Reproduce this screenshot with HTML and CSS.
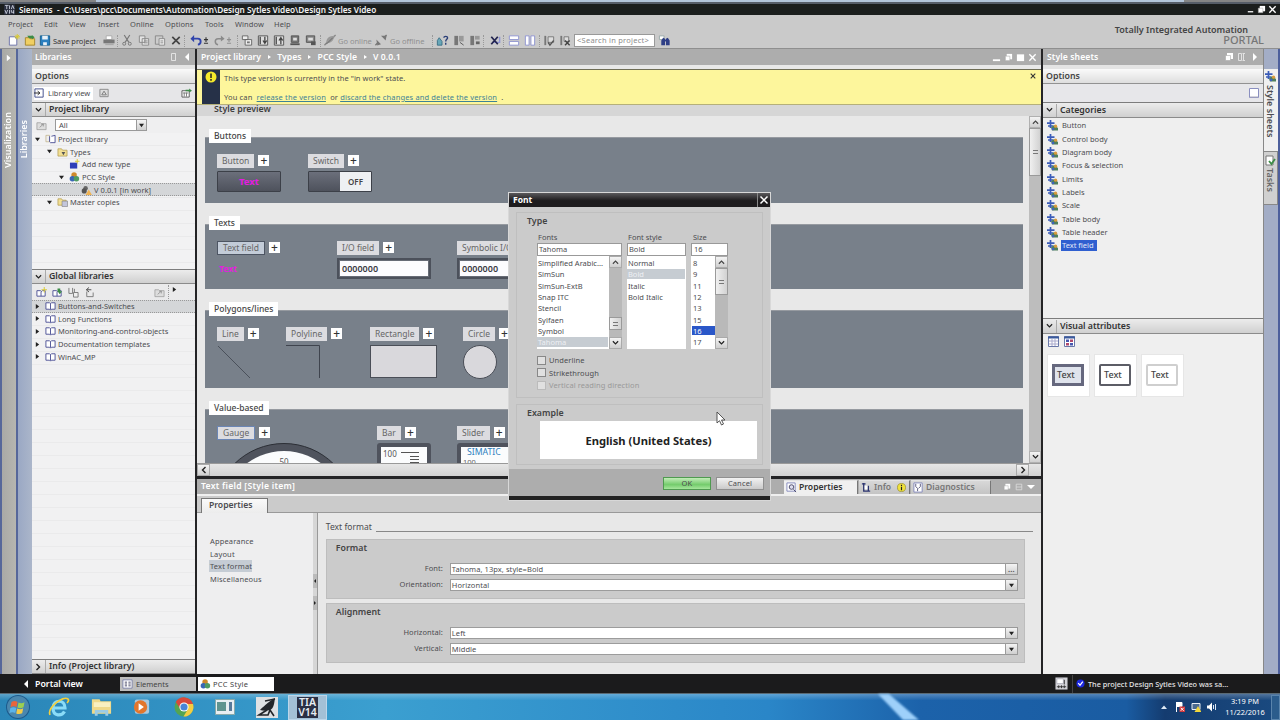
FILE: index.html
```html
<!DOCTYPE html>
<html lang="en">
<head>
    <meta charset="UTF-8">
    <meta name="viewport" content="width=device-width, initial-scale=1.0">
    <title>Siemens - Design Sytles Video</title>
    <link rel="stylesheet" href="styles.css">
</head>
<body>

<!-- shared icons -->
<svg class="defs" width="0" height="0">
    <symbol id="i-book" viewBox="0 0 12 10"><path d="M1 1.500h4l1 1 1-1h4v7H7l-1 1-1-1H1z" fill="#fff" stroke="#4a4f94"/><path d="M6 2.500v6.500" stroke="#4a4f94"/></symbol>
    <symbol id="i-cat" viewBox="0 0 11 11"><path d="M3.500 0v8M0 3.200h7.500M1 6h5" stroke="#3b5cb8" stroke-width="1.700"/><path d="M4 7.500 7 5l4 3v2.500H5z" fill="#4f7f5c"/><circle cx="8.600" cy="6.200" r="1.600" fill="#d99a3c"/><circle cx="6" cy="9" r="1.300" fill="#3f62bd"/></symbol>
    <symbol id="i-folder" viewBox="0 0 12 11"><path d="M1 2h4l1 1.500h4V9H1z" fill="#f2df94" stroke="#b09a4c" stroke-width=".8"/><path d="M5.500 4.500h6v6h-6z" fill="#c3c6dc" stroke="#777" stroke-width=".6"/></symbol>
    <symbol id="i-style" viewBox="0 0 12 12"><circle cx="5.500" cy="3.500" r="3.300" fill="#cf8a2c"/><circle cx="3.500" cy="8" r="3.300" fill="#3a67b5"/><circle cx="8.300" cy="8" r="3.300" fill="#4f9c63"/></symbol>
    <symbol id="i-down" viewBox="0 0 8 6"><path d="m1 1 3 3 3-3" fill="none" stroke="#222" stroke-width="1.400"/></symbol>
    <symbol id="i-up" viewBox="0 0 8 6"><path d="m1 5 3-3 3 3" fill="none" stroke="#444" stroke-width="1.300"/></symbol>
    <symbol id="i-right" viewBox="0 0 6 8"><path d="m1.500 1 3 3-3 3" fill="none" stroke="#222" stroke-width="1.400"/></symbol>
    <symbol id="i-tri" viewBox="0 0 6 6"><path d="M0 1h6L3 5z" fill="#222"/></symbol>
    <symbol id="i-trir" viewBox="0 0 6 6"><path d="M1 0v6l4-3z" fill="#222"/></symbol>
    <symbol id="i-float" viewBox="0 0 10 10"><path d="M3 1h6v6H3z" fill="#fff"/><path d="M1.500 3.500h5v5h-5z" fill="#fff" stroke="#aaa" stroke-width=".6"/></symbol>
    <symbol id="i-x" viewBox="0 0 10 10"><path d="m1.500 1.500 7 7m0-7-7 7" stroke="#fff" stroke-width="1.500"/></symbol>
    <symbol id="i-pm" viewBox="0 0 8 14"><path d="M4 3.500v5M1.800 6h4.400M1.800 10h4.400" stroke="currentColor" stroke-width="1.200"/></symbol>
    <symbol id="i-newf" viewBox="0 0 12 11"><path d="M1 2.500h4l1 1h5V10H1z" fill="#ddd" stroke="#999" stroke-width=".8"/><path d="M4 7.500 8 4m0 0H5.500M8 4v2.500" fill="none" stroke="#888" stroke-width=".8"/></symbol>
</svg>

<div class="topstrip"><i></i><b></b><i></i></div>
<div class="titlebar">
    <svg class="logo" viewBox="0 0 12 11"><path d="M0 0h12v11H0z" fill="#2b3040"/><path d="M1 1h4M3 1v4M6 1v4M8 5l1.500-4L11 5M1 6l1.500 4L4 6M6 6v4M8 6v2.500h3M10.500 6v4" fill="none" stroke="#d5d9e5" stroke-width=".9"/></svg>
    <span>Siemens &nbsp;-&nbsp; C:\Users\pcc\Documents\Automation\Design Sytles Video\Design Sytles Video</span>
    <div class="wbtns">
        <svg viewBox="0 0 10 10"><path d="M2 7.500h6" stroke="#fff" stroke-width="1.400"/></svg>
        <svg><use href="#i-float"/></svg>
        <svg><use href="#i-x"/></svg>
    </div>
</div>

<div class="top">
    <nav class="menu">
        <a class="m1">Project</a><a class="m2">Edit</a><a class="m3">View</a><a class="m4">Insert</a><a class="m5">Online</a><a class="m6">Options</a><a class="m7">Tools</a><a class="m8">Window</a><a>Help</a>
    </nav>
    <div class="toolbar">
        <svg viewBox="0 0 16 14"><path d="M3 3h6l2 2v7H3z" fill="#fff" stroke="#6a70a8"/><path d="M11.500 0v6M8.500 3h6M9.500 1l4 4m0-4-4 4" stroke="#d8c82e"/></svg>
        <svg viewBox="0 0 16 14"><path d="M3 4h4l1 1h5v7H3z" fill="#f0cf62" stroke="#a5862c"/><path d="M5 2h5V1l3 2.500L10 6V4.500H7z" fill="#3c8c46"/></svg>
        <svg class="save" viewBox="0 0 16 14"><path d="M3 2h10v10H3z" fill="#2a7fc0" stroke="#17608f"/><path d="M5 2h6v4H5zM6 9h4v3H6z" fill="#e8f1f8"/></svg>
        <span class="t-save">Save project</span>
        <svg class="g5" viewBox="0 0 16 14"><path d="M5 2h6v4H5z" fill="#fff" stroke="#999" stroke-width=".7"/><path d="M2 6h12v4H2z" fill="#777"/><path d="M4 10h9v2H4z" fill="#aaa"/></svg>
        <i class="sep"></i>
        <svg viewBox="0 0 16 14"><path d="m5 1 5 8m1-8L6 9" stroke="#777" stroke-width="1.200"/><circle cx="5" cy="10.500" r="1.600" fill="none" stroke="#777"/><circle cx="11" cy="10.500" r="1.600" fill="none" stroke="#777"/></svg>
        <svg class="g1" viewBox="0 0 16 14"><path d="M3 2h6v7H3zM6 5h7v7H6z" fill="#e4e4e4" stroke="#888"/><path d="M8 7.500h4M8 9.500h4" stroke="#888"/></svg>
        <svg viewBox="0 0 16 14"><path d="M3 2h8v9H3z" fill="#ccc" stroke="#888"/><path d="M7 5h6v7H7z" fill="#eee" stroke="#888"/><path d="M8.500 7.500h3M8.500 9.500h3" stroke="#888"/></svg>
        <svg viewBox="0 0 16 14"><path d="m4 3 8 8m0-8-8 8" stroke="#444" stroke-width="1.800"/></svg>
        <i class="sep"></i>
        <svg class="g2" viewBox="0 0 16 14"><path d="M5 5h5c4 0 4 6 0 6.500" fill="none" stroke="#3044ac" stroke-width="2"/><path d="M2 5l4-3.800V9z" fill="#3044ac"/></svg>
        <svg class="pm"><use href="#i-pm"/></svg>
        <svg class="redo" viewBox="0 0 16 14"><path d="M11 5H7c-4 0-4 6 0 6.500" fill="none" stroke="#8a8a8a" stroke-width="1.600"/><path d="m14 5-4-3.500V8z" fill="#8a8a8a"/></svg>
        <svg class="pm off"><use href="#i-pm"/></svg>
        <i class="sep g4"></i>
        <svg viewBox="0 0 16 14"><path d="M3 2h6v4H3zM6 6h7v6H6z" fill="#eee" stroke="#666"/><path d="M8 8h3v2H8z" fill="#777"/></svg>
        <svg viewBox="0 0 16 14"><path d="M3 2h10v10H3z" fill="#ddd" stroke="#555"/><path d="M5 3v8M10 3v6M8 7l2 3 2-3" fill="none" stroke="#444" stroke-width="1.400"/></svg>
        <svg viewBox="0 0 16 14"><path d="M3 2h10v10H3z" fill="#ddd" stroke="#555"/><path d="M5 3v8M10 11V5M8 7l2-3 2 3" fill="none" stroke="#444" stroke-width="1.400"/></svg>
        <svg viewBox="0 0 16 14"><path d="M4 2h8v7H4z" fill="#777" stroke="#555"/><path d="M6 4h4v3H6z" fill="#ddd"/><path d="M3 11h10" stroke="#555" stroke-width="2"/></svg>
        <svg viewBox="0 0 16 14"><path d="M3 2h9v7H3z" fill="#888" stroke="#555"/><path d="M5 4h5v3H5z" fill="#ddd"/><path d="M8 8h5v4H8z" fill="#555"/></svg>
        <i class="sep g1"></i>
        <svg viewBox="0 0 16 14"><path d="m2 12 3-3m6-5 3-3" stroke="#888" stroke-width="1.500"/><path d="M4 9c0-4 3-7 9-7-1 5-4 8-8 8z" fill="#999"/><path d="m4 11 7-7" stroke="#666"/></svg>
        <span class="off t-go">Go online</span>
        <svg viewBox="0 0 16 14"><path d="m2 12 3-3m6-5 3-3" stroke="#777" stroke-width="1.500"/><path d="m3 6 5 5-4 1.500zM8 2l5 5 1-5z" fill="#777"/></svg>
        <span class="off t-off">Go offline</span>
        <i class="sep"></i>
        <svg viewBox="0 0 16 14"><path d="M3 12V7l2-3 3 4v4z" fill="#68a7b8" stroke="#3b6f87"/><path d="M10 4c0-2 4-2 4 0s-2 1.500-2 4m0 1.500v2" fill="none" stroke="#2b3f77" stroke-width="1.500"/></svg>
        <svg class="g1" viewBox="0 0 16 14"><path d="M3 2h4v10H3z" fill="#777"/><path d="M8 2h5v6H8z" fill="#999"/><path d="m9 9 4 3" stroke="#555"/></svg>
        <svg viewBox="0 0 16 14"><path d="M3 2h4v10H3z" fill="#777"/><path d="M8 2h5v4H8z" fill="#999"/><path d="M9 8h4v3H9z" fill="#666"/></svg>
        <i class="sep"></i>
        <svg class="g2" viewBox="0 0 16 14"><path d="M5 9h8V3" fill="none" stroke="#8e95d4" stroke-width="1.500"/><path d="m4 3 7 8m0-8-7 8" stroke="#22244f" stroke-width="1.900"/></svg>
        <i class="sep"></i>
        <svg class="g1" viewBox="0 0 16 14"><path d="M3 2h10v4H3zM3 8h10v4H3z" fill="#fff" stroke="#8c92cf"/></svg>
        <svg viewBox="0 0 16 14"><path d="M3 2h4v10H3zM9 2h4v10H9z" fill="#fff" stroke="#8c92cf"/></svg>
        <i class="sep g1"></i>
        <svg viewBox="0 0 16 14"><path d="M3 2h2v10H3z" fill="#777"/><path d="M7 3h6v6H7z" fill="#ddd" stroke="#777"/><path d="m7 9 2 3 4-5" fill="none" stroke="#555" stroke-width="1.500"/></svg>
        <svg viewBox="0 0 16 14"><path d="M3 2h2v10H3z" fill="#777"/><path d="M7 3h5v5H7z" fill="#ddd" stroke="#777"/><path d="m8 7 5 5m0-5-5 5" stroke="#444" stroke-width="1.500"/></svg>
        <div class="search">&lt;Search in project&gt;</div>
        <svg class="g2" viewBox="0 0 16 14"><path d="M2 2h5v4H2z" fill="#fff" stroke="#9aa"/><path d="M4 12V7l2-3 2 1v7zM9 12V5l2-1 2 3v5z" fill="#2f3f86"/><path d="M7 7h3" stroke="#2f3f86" stroke-width="2"/></svg>
    </div>
    <div class="brand"><span>Totally Integrated Automation</span><b>PORTAL</b></div>
</div>

<div class="main">
    <div class="strip strip-vis"><svg viewBox="0 0 6 8"><path d="M1 0v8l4.500-4z" fill="#fff"/></svg><span>Visualization</span></div>
    <div class="strip strip-lib"><span>Libraries</span></div>

    <aside class="left">
        <div class="phead"><span>Libraries</span><svg class="pin" viewBox="0 0 8 8"><path d="M1.500.5h4v7h-4zM5.500.5v7" fill="none" stroke="#e2e2e2"/></svg><svg viewBox="0 0 8 8"><path d="M6 0v8L2 4z" fill="#fff"/></svg></div>
        <div class="opt">Options</div>
        <div class="libbar">
            <div class="libview"><svg viewBox="0 0 12 10"><path d="M1 .5h9v9H1z" fill="#fff" stroke="#3a4688"/><path d="M0 5h6M4 3l2.500 2L4 7" fill="none" stroke="#222"/></svg>Library view</div>
            <svg viewBox="0 0 12 10"><path d="M1 1h9v8H1z" fill="#ddd" stroke="#888"/><path d="m3 7 2.500-4L8 7z" fill="none" stroke="#777"/></svg>
            <svg class="lib-r" viewBox="0 0 12 11"><path d="M1 3h8v7H1z" fill="#fff" stroke="#555"/><path d="M2 5.500h6M3.500 5v4.500M6 5v4.500" stroke="#777"/><path d="M5 2h4V.5L12 3 9 5V3.500H5z" fill="#3c8c46"/></svg>
        </div>
        <div class="sec"><svg><use href="#i-down"/></svg><span>Project library</span></div>
        <div class="filter"><svg><use href="#i-newf"/></svg><div class="combo"><span>All</span><b><svg><use href="#i-tri"/></svg></b></div></div>
        <ul class="tree tree-a">
            <li class="l0"><svg class="ar"><use href="#i-tri"/></svg><svg class="ic" viewBox="0 0 12 10"><path d="M1 1h4v7H1z" fill="#eee" stroke="#b9a877" stroke-width=".7"/><path d="M5 2v6l1 1h5V1L7 2" fill="#fff" stroke="#4a4f94"/></svg>Project library</li>
            <li class="l1"><svg class="ar"><use href="#i-tri"/></svg><svg class="ic" viewBox="0 0 12 11"><path d="M1 2h4l1 1.500h5V10H1z" fill="#f2df94" stroke="#b09a4c" stroke-width=".8"/><path d="M5 5.500h4L7 9z" fill="#555"/></svg>Types</li>
            <li class="l2 noar"><svg class="ic" viewBox="0 0 12 11"><path d="M1 4h8v6.500H1z" fill="#2e3fb8"/><path d="M9 0v5M6.500 2.500h5" stroke="#d8c82e"/></svg>Add new type</li>
            <li class="l2"><svg class="ar"><use href="#i-tri"/></svg><svg class="ic"><use href="#i-style"/></svg>PCC Style</li>
            <li class="l3 noar sel"><svg class="ic" viewBox="0 0 12 11"><circle cx="5" cy="3.500" r="2.500" fill="#666"/><circle cx="3.500" cy="6.500" r="2.800" fill="#555"/><path d="m8.500 5 3.500 6H5z" fill="#f0b352"/></svg>V 0.0.1 [in work]</li>
            <li class="l1"><svg class="ar"><use href="#i-tri"/></svg><svg class="ic"><use href="#i-folder"/></svg>Master copies</li>
        </ul>
        <div class="sec"><svg><use href="#i-down"/></svg><span>Global libraries</span></div>
        <div class="gbar">
            <svg viewBox="0 0 12 12"><path d="M1 4h4l1 1 1-1h3v6H1zM5.500 5v5" fill="#fff" stroke="#4a4f94"/><path d="M9 0v6M6 3h6" stroke="#d8c82e"/></svg>
            <svg viewBox="0 0 12 12"><path d="M1 4h4l1 1 1-1h3v6H1zM5.500 5v5" fill="#fff" stroke="#4a4f94"/><path d="M6 1.500h3v3h2L8.500 8 6 4.500z" fill="#3c8c46"/></svg>
            <svg viewBox="0 0 12 12"><path d="M1 1v6h4V1M7 2v4" fill="none" stroke="#777"/><path d="M6 6h5v5H6z" fill="#eee" stroke="#777"/></svg>
            <svg viewBox="0 0 12 12"><path d="M3 5v5.500h7V6" fill="none" stroke="#777"/><path d="M8 3H3m2.500-2.500L2.500 3l3 2.500" fill="none" stroke="#444"/></svg>
            <svg class="g-new"><use href="#i-newf"/></svg><i></i><svg class="g-ar"><use href="#i-trir"/></svg>
        </div>
        <ul class="tree tree-b">
            <li class="l0 sel"><svg class="ar"><use href="#i-trir"/></svg><svg class="ic"><use href="#i-book"/></svg>Buttons-and-Switches</li>
            <li class="l0"><svg class="ar"><use href="#i-trir"/></svg><svg class="ic"><use href="#i-book"/></svg>Long Functions</li>
            <li class="l0"><svg class="ar"><use href="#i-trir"/></svg><svg class="ic"><use href="#i-book"/></svg>Monitoring-and-control-objects</li>
            <li class="l0"><svg class="ar"><use href="#i-trir"/></svg><svg class="ic"><use href="#i-book"/></svg>Documentation templates</li>
            <li class="l0"><svg class="ar"><use href="#i-trir"/></svg><svg class="ic"><use href="#i-book"/></svg>WinAC_MP</li>
        </ul>
        <div class="sec"><svg class="rt"><use href="#i-right"/></svg><span>Info (Project library)</span></div>
    </aside>

    <div class="center">
        <div class="phead crumbs">
            <span>Project library</span><i></i><span>Types</span><i></i><span>PCC Style</span><i></i><span>V 0.0.1</span>
            <div class="cbtns">
                <svg viewBox="0 0 10 10"><path d="M1 8h8" stroke="#fff" stroke-width="2"/></svg>
                <svg><use href="#i-float"/></svg>
                <svg viewBox="0 0 10 10"><path d="M1 1.500h8V9H1z" fill="#fff"/></svg>
                <svg><use href="#i-x"/></svg>
            </div>
        </div>
        <div class="notice">
            <div class="nicon"><svg viewBox="0 0 12 12"><circle cx="6" cy="6" r="5.500" fill="#f5e92c"/><path d="M6 2.500v4.500M6 8v1.700" stroke="#222" stroke-width="1.500"/></svg></div>
            <div class="ntext">
                <p>This type version is currently in the "in work" state.</p>
                <p class="nlinks">You can &nbsp;<a>release the version</a>&nbsp; or <a>discard the changes and delete the version</a>&nbsp; .</p>
            </div>
            <svg class="nclose" viewBox="0 0 6 6"><path d="m.7.7 4.600 4.600m0-4.600L.7 5.300" stroke="#333" stroke-width="1.100"/></svg>
        </div>
        <div class="pvhead"><span>Style preview</span></div>
        <div class="pvrow">
            <div class="preview">
                <section class="box b-buttons">
                    <h4>Buttons</h4>
                    <div class="items">
                        <div class="it w91"><p><span>Button</span><b>+</b></p><div class="btn3d">Text</div></div>
                        <div class="it"><p><span>Switch</span><b>+</b></p><div class="switch"><i></i><u>OFF</u></div></div>
                    </div>
                </section>
                <section class="box b-texts">
                    <h4>Texts</h4>
                    <div class="items">
                        <div class="it w120"><p><span class="act">Text field</span><b>+</b></p><div class="ptext">Text</div></div>
                        <div class="it w120"><p><span>I/O field</span><b>+</b></p><div class="io">0000000</div></div>
                        <div class="it"><p><span>Symbolic I/O field</span><b>+</b></p><div class="io">0000000</div></div>
                    </div>
                </section>
                <section class="box b-poly">
                    <h4>Polygons/lines</h4>
                    <div class="items">
                        <div class="it w69"><p><span>Line</span><b>+</b></p><svg width="36" height="36"><path d="m1 1 32 32" stroke="#4a505a"/></svg></div>
                        <div class="it w84"><p><span>Polyline</span><b>+</b></p><svg width="36" height="36"><path d="M0 .5h33.500V33" fill="none" stroke="#3f444e"/></svg></div>
                        <div class="it w93"><p><span>Rectangle</span><b>+</b></p><div class="rect"></div></div>
                        <div class="it"><p><span>Circle</span><b>+</b></p><div class="circle"></div></div>
                    </div>
                </section>
                <section class="box b-value">
                    <h4>Value-based</h4>
                    <div class="items">
                        <div class="it w160"><p><span class="act2">Gauge</span><b>+</b></p><svg class="gauge" width="134" height="24" viewBox="0 0 134 24"><circle cx="67" cy="72" r="70.500" fill="#4f535d" stroke="#2c2f36"/><circle cx="67" cy="71" r="62" fill="#fbfcfd"/><text x="67" y="22.500" text-anchor="middle">50</text></svg></div>
                        <div class="it w80"><p><span>Bar</span><b>+</b></p><div class="bar">100<svg width="20" height="12"><path d="M1 1.500h18M10 5.500h9M10 8.500h9M10 11.500h9" stroke="#555"/></svg></div></div>
                        <div class="it"><p><span>Slider</span><b>+</b></p><div class="bar slider">SIMATIC<small>100</small></div></div>
                    </div>
                </section>
            </div>
            <div class="vscroll"><b><svg><use href="#i-up"/></svg></b><div class="thumb"><i></i></div><div class="track"></div><b><svg><use href="#i-down"/></svg></b></div>
        </div>
        <div class="hscroll"><b><svg class="flip"><use href="#i-right"/></svg></b><div></div><b><svg><use href="#i-right"/></svg></b></div>

        <div class="phead props-head">
            <span>Text field [Style item]</span>
            <div class="ptabs">
                <div class="ptab on pt1"><svg viewBox="0 0 12 12"><path d="M1 1h9v9H1z" fill="#fff" stroke="#8288bb"/><circle cx="6" cy="5.500" r="2.500" fill="#dde" stroke="#446"/><path d="m8 8 3 3" stroke="#446"/></svg>Properties</div>
                <div class="ptab pt2"><svg viewBox="0 0 12 12"><path d="M3 1v9h7M1 2h4M8 4v6" fill="none" stroke="#2c3570" stroke-width="1.500"/><path d="M4 4h3v4H4z" fill="#fff"/></svg>Info<svg class="inf" viewBox="0 0 10 10"><circle cx="5" cy="5" r="4.500" fill="#f0e23c" stroke="#8f8622" stroke-width=".7"/><path d="M5 2v1.300M5 4.200V8" stroke="#222" stroke-width="1.300"/></svg></div>
                <div class="ptab pt3"><svg viewBox="0 0 12 12"><path d="M1 1h9v10H1z" fill="#fff" stroke="#8288bb"/><path d="M3 2v3l2 2v3M8 2v3L6 7" fill="none" stroke="#557"/></svg>Diagnostics</div>
                <svg class="pi"><use href="#i-float"/></svg>
                <svg class="pi" viewBox="0 0 10 10"><path d="M1.500 1.500h7v7h-7zM1.500 5h7" fill="none" stroke="#ddd"/></svg>
                <svg class="pi" viewBox="0 0 10 10"><path d="M0 2.500h10L5 7.500z" fill="#fff"/></svg>
            </div>
        </div>
        <div class="subtabs"><span>Properties</span></div>
        <div class="props">
            <ul class="pnav">
                <li>Appearance</li><li>Layout</li><li><span>Text format</span></li><li>Miscellaneous</li>
            </ul>
            <div class="splitter"><svg viewBox="0 0 4 8"><path d="M3 2v4L1 4z" fill="#222"/></svg><svg viewBox="0 0 4 8"><path d="M1 2v4l2-2z" fill="#222"/></svg></div>
            <div class="pform">
                <div class="ptitle">Text format<i></i></div>
                <fieldset>
                    <h5>Format</h5>
                    <div class="frow"><label>Font:</label><div>Tahoma, 13px, style=Bold</div><b>...</b></div>
                    <div class="frow"><label>Orientation:</label><div>Horizontal</div><b><svg><use href="#i-tri"/></svg></b></div>
                </fieldset>
                <fieldset>
                    <h5>Alignment</h5>
                    <div class="frow"><label>Horizontal:</label><div>Left</div><b><svg><use href="#i-tri"/></svg></b></div>
                    <div class="frow"><label>Vertical:</label><div>Middle</div><b><svg><use href="#i-tri"/></svg></b></div>
                </fieldset>
            </div>
        </div>
    </div>

    <aside class="right">
        <div class="phead"><span>Style sheets</span><svg class="wide"><use href="#i-float"/></svg><svg class="pin" viewBox="0 0 8 8"><path d="M.5.5h3v7h-3zM5.500.5v7M4.500.5h2.500M4.500 7.500h2.500" fill="none" stroke="#e2e2e2"/></svg><svg viewBox="0 0 8 8"><path d="M2 0v8l4-4z" fill="#fff"/></svg></div>
        <div class="opt">Options</div>
        <div class="rbar"><svg viewBox="0 0 10 10"><path d="M.5.5h9v9h-9z" fill="#fff" stroke="#8a8fc0"/><path d="M1 9h8" stroke="#aab"/></svg></div>
        <div class="sec"><svg><use href="#i-down"/></svg><span>Categories</span></div>
        <ul class="cats">
            <li><svg><use href="#i-cat"/></svg><span>Button</span></li>
            <li><svg><use href="#i-cat"/></svg><span>Control body</span></li>
            <li><svg><use href="#i-cat"/></svg><span>Diagram body</span></li>
            <li><svg><use href="#i-cat"/></svg><span>Focus &amp; selection</span></li>
            <li><svg><use href="#i-cat"/></svg><span>Limits</span></li>
            <li><svg><use href="#i-cat"/></svg><span>Labels</span></li>
            <li><svg><use href="#i-cat"/></svg><span>Scale</span></li>
            <li><svg><use href="#i-cat"/></svg><span>Table body</span></li>
            <li><svg><use href="#i-cat"/></svg><span>Table header</span></li>
            <li class="on"><svg><use href="#i-cat"/></svg><span>Text field</span></li>
        </ul>
        <div class="sec"><svg><use href="#i-down"/></svg><span>Visual attributes</span></div>
        <div class="vbar">
            <svg viewBox="0 0 11 11"><path d="M.5.5h10v10H.5z" fill="#fff" stroke="#6a78a8"/><path d="M0 1.500h11" stroke="#3a5a9c" stroke-width="2"/><path d="M1 5h9M1 8h9M4 3v7M7 3v7" stroke="#aac"/></svg>
            <svg viewBox="0 0 11 11"><path d="M.5.5h10v10H.5z" fill="#fff" stroke="#6a78a8"/><path d="M0 1.500h11" stroke="#3a5a9c" stroke-width="2"/><path d="M2 3.500h3v2.500H2zM6 7h3v2.500H6z" fill="#4658b0"/><path d="M6 3.500h3v2.500H6zM2 7h3v2.500H2z" fill="#b0486c"/></svg>
        </div>
        <div class="cards"><div><span class="c1">Text</span></div><div><span class="c2">Text</span></div><div><span class="c3">Text</span></div></div>
    </aside>
    <div class="rstrip">
        <div class="rt1"><svg><use href="#i-cat"/></svg><span>Style sheets</span></div>
        <div class="rt2"><svg viewBox="0 0 11 11"><path d="M1 1h7v9H1z" fill="#fff" stroke="#777"/><path d="m4 6 2.500 3L10 4" fill="none" stroke="#3c8c46" stroke-width="1.800"/></svg><span>Tasks</span></div>
    </div>
</div>

<div class="status">
    <div class="portal"><svg viewBox="0 0 6 8"><path d="M5 0v8L1 4z" fill="#fff"/></svg>Portal view</div>
    <div class="wtab"><svg viewBox="0 0 12 10"><path d="M1 .5h10v9H1z" fill="#fff" stroke="#7b80a8"/><path d="M3 3h2.500M7 3h2.500M3 5h2.500M7 5h2.500M3 7h2.500M7 7h2.500" stroke="#446"/></svg>Elements</div>
    <div class="wtab on"><svg><use href="#i-style"/></svg>PCC Style</div>
    <svg class="s-ic" viewBox="0 0 14 14"><path d="M.5.5h13v13H.5z" fill="#d3d3d8"/><path d="M2 2h7v5H2z" fill="#fff" stroke="#99a" stroke-width=".6"/><path d="M2 10.500h10M4 9v3M7 9v3M10 9v3M10 3v5" stroke="#333"/></svg>
    <div class="msg"><svg viewBox="0 0 10 10"><circle cx="5" cy="5" r="4.500" fill="#1c28e0"/><path d="m2.500 4.500 2 2.500 3-4" fill="none" stroke="#fff" stroke-width="1.400"/></svg>The project Design Sytles Video was sa...</div>
</div>

<div class="taskbar">
    <svg class="streak" viewBox="0 0 60 26"><path d="M6 0h11l30 26H31z" fill="#9ed0fa"/></svg>
    <svg class="orb" viewBox="0 0 26 26"><circle cx="13" cy="13" r="12" fill="#1c5a8c"/><circle cx="13" cy="13" r="11" fill="#4a87ae"/><path d="M6.500 8c2-1.300 4-1.300 6 0l-1 5c-2-1-4-1-6 .3z" fill="#e8653c"/><path d="M13.500 8.500c2 1 4 1 6-.3l-1 5c-2 1.200-4 1.200-6 .3z" fill="#9ccf52"/><path d="M5.300 14.200c2-1.200 4-1.200 6-.2l-1 5c-2-1-4-1-6 .2z" fill="#5cb4ea"/><path d="M12.200 14.500c2 1 4 1 6-.2l-1 5c-2 1-4 1-6 .2z" fill="#f4cc48"/></svg>
    <svg class="t-ie" viewBox="0 0 22 22"><path d="M5 12h12c0-9-12-9-12 0s9 8 11.500 3.500" fill="none" stroke="#8adcf8" stroke-width="3.200"/><path d="M2 19C-1 12 15-1 20 3c1 1 0 3-1 4" fill="none" stroke="#f2cf3e" stroke-width="1.700"/></svg>
    <svg class="t-ex" viewBox="0 0 24 22"><path d="M2 3h8l1 2h11v13H2z" fill="#eed98a"/><path d="M4 6h17v5H4z" fill="#f8f0c0"/><path d="M5 20v-6h14v6h-3v-3H8v3z" fill="#9ccbe6"/></svg>
    <svg class="t-mp" viewBox="0 0 20 18"><rect x="3" y="1" width="15" height="15" rx="2" fill="#a9c9de"/><circle cx="9" cy="9" r="7" fill="#e2762c"/><path d="m7 5 5.500 4L7 13z" fill="#fff"/></svg>
    <svg class="t-cr" viewBox="0 0 20 20"><circle cx="10" cy="10" r="9.500" fill="#54a452"/><path d="M1.800 5A9.500 9.500 0 0 1 19 7H10L6 11.500z" fill="#d8493c"/><path d="M19 7a9.500 9.500 0 0 1-9.500 12.500L14 12l-1-5z" fill="#f4cd42"/><circle cx="10" cy="10" r="4.600" fill="#fff"/><circle cx="10" cy="10" r="3.600" fill="#4a85d8"/></svg>
    <svg class="t-wn" viewBox="0 0 20 18"><path d="M.5 1.500h19v15H.5z" fill="#e8eef2" stroke="#8aa"/><path d="M2 4h9v9H2z" fill="#5f948f"/><path d="M14 4h3v9h-3z" fill="#56799a"/></svg>
    <svg class="t-sat" viewBox="0 0 22 21"><path d="M0 0h22v21H0z" fill="#dfe1e3"/><path d="M4 13C6 11 12 5 19 1c-1 6-1 10-5 12-3 1-7 1-10 0z" fill="#23262a"/><path d="m9 4 10-2M11 13l-8 5h9l2-5 4 6" fill="none" stroke="#23262a" stroke-width="1.600"/></svg>
    <div class="t-tia"><div><span>TIA</span><span>V14</span></div></div>
    <div class="tray">
        <svg viewBox="0 0 10 12"><path d="M2 8h6L5 4.500z" fill="#dde8f4"/></svg>
        <svg viewBox="0 0 10 12"><path d="M1.500 1v10M2 1.500h5v4H2z" fill="#fff" stroke="#fff"/><path d="M4.500 5.500H10V11H4.500z" fill="#d2383c"/><path d="m5.700 6.800 3 3m0-3-3 3" stroke="#fff"/></svg>
        <svg viewBox="0 0 10 12"><path d="M1 2.500h8v6H1z" fill="#4a6a90" stroke="#e8eef4"/><path d="m7 5 3.500 6h-7z" fill="#f1d63a"/></svg>
        <svg viewBox="0 0 10 12"><path d="M0 4.500h2L5 1.500v9l-3-3H0z" fill="#fff"/><path d="M6.500 4v4M8.500 3v6" stroke="#dde8f4"/></svg>
        <div class="clock">3:19 PM<br>11/22/2016</div>
        <i class="peek"></i>
    </div>
</div>

<!-- font dialog -->
<div class="dialog">
    <div class="dtitle"><span>Font</span><b><svg><use href="#i-x"/></svg></b></div>
    <div class="dbody">
        <div class="dgroup dg1">
            <h5>Type</h5>
            <div class="dcols">
                <div class="dc1">
                    <label>Fonts</label><div class="din">Tahoma</div>
                    <div class="dlist"><ul><li>Simplified Arabic...</li><li>SimSun</li><li>SimSun-ExtB</li><li>Snap ITC</li><li>Stencil</li><li>Sylfaen</li><li>Symbol</li><li class="soft">Tahoma</li></ul>
                        <div class="dscroll"><b><svg><use href="#i-up"/></svg></b><div class="thumb low"><i></i></div><b><svg><use href="#i-down"/></svg></b></div></div>
                </div>
                <div class="dc2">
                    <label>Font style</label><div class="din">Bold</div>
                    <div class="dlist"><ul><li>Normal</li><li class="soft">Bold</li><li>Italic</li><li>Bold Italic</li></ul></div>
                </div>
                <div class="dc3">
                    <label>Size</label><div class="din">16</div>
                    <div class="dlist"><ul><li>8</li><li>9</li><li>11</li><li>12</li><li>13</li><li>15</li><li class="hard">16</li><li>17</li></ul>
                        <div class="dscroll"><b><svg><use href="#i-up"/></svg></b><div class="thumb"><i></i></div><b class="end"><svg><use href="#i-down"/></svg></b></div></div>
                </div>
            </div>
            <div class="chk"><i></i>Underline</div>
            <div class="chk"><i></i>Strikethrough</div>
            <div class="chk dis"><i></i>Vertical reading direction</div>
        </div>
        <div class="dgroup dg2">
            <h5>Example</h5>
            <div class="sample">English (United States)</div>
        </div>
    </div>
    <div class="dfoot"><div class="ok">OK</div><div>Cancel</div></div>
</div>
<svg class="cursor" viewBox="0 0 10 15"><path d="M1 1v11l2.500-2.300L5.500 14l2-1-2-4H9z" fill="#fff" stroke="#444" stroke-width=".9"/></svg>

</body>
</html>
```
FILE: styles.css
```css
* {
    box-sizing: border-box;
}
body {
    margin: 0;
    width: 1280px;
    height: 720px;
    overflow: hidden;
    display: flex;
    flex-direction: column;
    position: relative;
    font: 7.5px/12px "Noto Sans", "Open Sans", sans-serif;
    color: #4c4c50;
    background: #cacaca;
    white-space: nowrap;
}
ul, p, h4, h5, fieldset {
    margin: 0;
    padding: 0;
    border: 0;
    list-style: none;
}
svg {
    display: block;
    flex: none;
}
.defs {
    position: absolute;
}

/* title, menu, toolbar */
.topstrip {
    display: flex;
    height: 4px;
    border-bottom: 2px solid #565d68;
}
.topstrip i {
    width: 96px;
    background: #858585;
}
.topstrip b {
    flex: 1;
    background: #b3c5da;
}
.titlebar {
    height: 11px;
    background: #1b1e1d;
    color: #f2f2f2;
    display: flex;
    align-items: center;
    padding-left: 4px;
    font-size: 8.25px;
    font-weight: 600;
    letter-spacing: -.02px;
    line-height: 11px;
}
.logo {
    width: 11px;
    height: 11px;
    margin-right: 4px;
}
.wbtns, .cbtns {
    display: flex;
    margin-left: auto;
    gap: 2px;
    padding-right: 3px;
}
.wbtns svg {
    width: 9px;
    height: 9px;
}
.top {
    height: 34px;
    position: relative;
    border-bottom: 1px solid #8f8f8f;
    background: #cacaca;
}
.menu {
    display: flex;
    height: 18px;
    padding-left: 8px;
    line-height: 19px;
    letter-spacing: .08px;
}
.m1 { width: 36px; }
.m2 { width: 25px; }
.m3 { width: 29px; }
.m4 { width: 32px; }
.m5 { width: 35px; }
.m6 { width: 40px; }
.m7 { width: 30px; }
.m8 { width: 39px; }
.toolbar {
    display: flex;
    align-items: center;
    height: 15px;
    padding-left: 6px;
    color: #333;
}
.toolbar svg {
    width: 16px;
    height: 13px;
}
.toolbar .pm {
    width: 8px;
    margin-left: -2px;
}
.toolbar .save { margin-left: -1px; }
.toolbar .redo { margin-left: 1px; }
.toolbar .off { color: #909090; }
.toolbar .g1 { margin-left: 1px; }
.toolbar .g2 { margin-left: 2px; }
.toolbar .g4 { margin-left: 4px; }
.toolbar .g5 { margin-left: 5px; }
.t-save { width: 43px; }
.t-go { width: 35px; }
.t-off { width: 43px; padding-left: 1px; }
.sep {
    width: 2px;
    height: 12px;
    border-left: 1px dotted #999;
}
.search {
    width: 81px;
    height: 13px;
    margin-left: 1px;
    padding-left: 2px;
    border: 1px solid #999;
    background: #fff;
    color: #8c8c8c;
    letter-spacing: .25px;
    line-height: 11px;
}
.brand {
    position: absolute;
    right: 16px;
    top: 9px;
    display: flex;
    flex-direction: column;
    align-items: flex-end;
    font-size: 9px;
    font-weight: 600;
    line-height: 11px;
    color: #444;
}
.brand span {
    margin-right: 16px;
}
.brand b {
    font-weight: 500;
    font-size: 11px;
    line-height: 10px;
    color: #777;
}

.main {
    display: flex;
    height: 625px;
}
.strip {
    width: 16px;
    padding-right: 2px;
    border-left: 2px solid #56679a;
    color: #fff;
    font-weight: 600;
    font-size: 9px;
    display: flex;
    flex-direction: column;
    align-items: center;
}
.strip svg {
    width: 5px;
    height: 8px;
    margin-top: 5px;
}
.strip span {
    writing-mode: vertical-rl;
    transform: rotate(180deg);
    line-height: 12px;
}
.strip-vis {
    background: linear-gradient(90deg, #a9a9a6, #b6b6b0);
}
.strip-vis span {
    margin-top: 50px;
    height: 56px;
}
.strip-lib {
    background: linear-gradient(90deg, #9aa8c4, #abb6ca);
}
.strip-lib span {
    margin-top: 71px;
}

/* panels */
.left {
    width: 163px;
    background: #efeff0;
    display: flex;
    flex-direction: column;
}
.phead {
    height: 16px;
    flex: none;
    background: #adadad;
    color: #fff;
    font-size: 8.6px;
    font-weight: 600;
    line-height: 17px;
    padding: 0 4px;
    display: flex;
    align-items: center;
}
.left .phead {
    padding-left: 3px;
}
.phead svg {
    width: 8px;
    height: 8px;
}
.left .phead span, .right .phead span {
    margin-right: auto;
}
.right .phead span {
    letter-spacing: .1px;
}
.phead .pin {
    margin-right: 5px;
}
.phead .wide {
    width: 10px;
    height: 10px;
    margin-right: 4px;
}
.opt {
    height: 19px;
    padding: 3px 0 0 3px;
    border-top: 4px solid #e4e4e4;
    border-bottom: 1px solid #929292;
    background: linear-gradient(#fafafa, #dedede);
    font-size: 8.8px;
    font-weight: 600;
    line-height: 8px;
    color: #444;
}
.libbar {
    height: 18px;
    display: flex;
    align-items: center;
    padding: 0 3px 0 2px;
    gap: 6px;
    background: #e6e6e8;
}
.libview {
    display: flex;
    align-items: center;
    width: 59px;
    height: 13px;
    background: #fff;
    gap: 3px;
}
.libbar svg {
    width: 11px;
    height: 10px;
}
.libbar .lib-r {
    margin-left: auto;
}
.sec {
    height: 15px;
    flex: none;
    display: flex;
    align-items: center;
    border-top: 1px solid #7d7d7d;
    border-bottom: 1px solid #8b8b8b;
    background: linear-gradient(#ececec, #d0d0d0);
    color: #333;
    font-size: 8.75px;
    font-weight: 600;
    line-height: 13px;
}
.sec svg {
    width: 7px;
    height: 6px;
    margin: 0 3px;
}
.sec .rt {
    width: 6px;
    height: 8px;
    margin-right: 4px;
}
.sec span {
    padding-left: 3px;
    border-left: 1px solid #aaa;
    flex: 1;
}
.filter {
    display: flex;
    align-items: center;
    gap: 8px;
    height: 16px;
    padding-left: 4px;
}
.filter > svg {
    width: 11px;
    height: 11px;
}
.combo {
    width: 92px;
    height: 12px;
    border: 1px solid #999;
    background: #fff;
    display: flex;
    justify-content: space-between;
    line-height: 10px;
    padding-left: 3px;
}
.combo b, .frow b, .hscroll b, .vscroll b, .dscroll b {
    display: flex;
    align-items: center;
    justify-content: center;
    background: linear-gradient(#f4f4f4, #cfcfcf);
}
.combo b {
    width: 10px;
    border-left: 1px solid #999;
}
.combo svg, .frow svg {
    width: 5px;
    height: 5px;
}
.tree li {
    display: flex;
    align-items: center;
    height: 12.6px;
}
.tree-a {
    height: 136px;
    letter-spacing: .05px;
    background: repeating-linear-gradient(#f2f2f3 0 12px, #eaeaeb 12px 13px);
}
.tree-b {
    flex: 1;
    background: repeating-linear-gradient(#f1f1f2 0 12px, #eaeaeb 12px 13px);
}
.tree .ar {
    width: 5px;
    height: 5px;
    margin-right: 5px;
}
.tree .ic {
    width: 11px;
    height: 10px;
    margin-right: 2px;
}
.l0 { padding-left: 3px; }
.l1 { padding-left: 15px; }
.l2 { padding-left: 27px; }
.l3 { padding-left: 38px; }
.l2.noar { padding-left: 37px; }
.l3.noar { padding-left: 49px; }
.tree .sel {
    background: #d4d6d8;
    border-top: 1px dotted #999;
    border-bottom: 1px dotted #999;
}
.gbar {
    height: 16px;
    display: flex;
    align-items: center;
    padding-left: 4px;
    gap: 5px;
    background: #eaeaeb;
}
.gbar svg {
    width: 11px;
    height: 11px;
}
.gbar .g-new { margin-left: 54px; }
.gbar i {
    height: 14px;
    margin-left: -2px;
    border-left: 1px dotted #999;
}
.gbar .g-ar {
    width: 5px;
    height: 5px;
    margin: -6px 0 0 -2px;
}

/* editor */
.center {
    width: 848px;
    border: solid #242426;
    border-width: 0 2px;
    background: #e8e8e8;
    display: flex;
    flex-direction: column;
}
.crumbs {
    letter-spacing: .08px;
}
.crumbs i {
    border-left: 3px solid #fff;
    border-top: 2px solid transparent;
    border-bottom: 2px solid transparent;
    margin: 0 6.5px;
}
.cbtns svg {
    width: 9px;
    height: 9px;
}
.cbtns {
    gap: 3px;
    padding: 0;
}
.notice {
    height: 36px;
    margin-top: 4px;
    border-top: 1px solid #6e6d55;
    border-bottom: 1px solid #b5b07a;
    background: #fdf69c;
    display: flex;
    padding-left: 5px;
}
.nicon {
    width: 18px;
    background: #263148;
}
.nicon svg {
    width: 12px;
    height: 12px;
    margin: 1px 0 0 3px;
}
.ntext {
    flex: 1;
    padding: 2px 0 0 4px;
    letter-spacing: .06px;
}
.ntext p {
    height: 19px;
}
.ntext .nlinks {
    letter-spacing: .14px;
}
.ntext a {
    color: #3d8296;
    text-decoration: underline;
}
.nclose {
    width: 6px;
    height: 6px;
    margin: 3px 5px;
}
.pvhead {
    height: 11px;
    background: #d6d6d6;
    padding-left: 17px;
    font-size: 8.8px;
    font-weight: 600;
    line-height: 8px;
    color: #3f3f3f;
}
.pvrow {
    height: 347px;
    display: flex;
    overflow: hidden;
}
.preview {
    flex: 1;
    padding: 21px 6px 0 8px;
    overflow: hidden;
}
.box {
    background: #78808a;
    border-top: 1px solid #969aa0;
    margin-bottom: 21px;
}
.b-buttons { height: 66px; }
.b-texts { height: 65px; }
.b-poly { height: 78px; }
.b-value { height: 80px; }
.box h4 {
    display: table;
    height: 14px;
    margin: -9px 0 0 4px;
    padding: 0 5px;
    position: relative;
    background: #fff;
    color: #444;
    font-size: 8.5px;
    font-weight: 500;
    line-height: 14px;
}
.items {
    display: flex;
    padding: 10px 0 0 12px;
}
.it p {
    display: flex;
    align-items: center;
    gap: 4px;
    height: 15px;
    margin-bottom: 4px;
    font-size: 8.5px;
}
.it p span {
    height: 14px;
    padding: 0 5px;
    background: #dcdce0;
    color: #666;
    line-height: 14px;
}
.it p b {
    width: 11px;
    height: 11px;
    background: #fff;
    color: #333;
    font-size: 12px;
    font-weight: 500;
    line-height: 11px;
    text-align: center;
}
.it p .act {
    background: #c3ccd8;
    border: 1px solid #4d5563;
    line-height: 12px;
}
.it p .act2 {
    border: 1px solid #6b86b5;
    line-height: 12px;
}
.w69 { width: 69px; }
.w80 { width: 80px; }
.w84 { width: 84px; }
.w91 { width: 91px; }
.w93 { width: 93px; }
.w120 { width: 120px; }
.w160 { width: 160px; }
.btn3d, .switch {
    width: 64px;
    height: 21px;
    margin-top: -1px;
    border: 1px solid #3c4048;
    border-radius: 1px;
    background: linear-gradient(#6b6f7b, #4e525c);
}
.btn3d {
    color: #e41ce0;
    font-size: 9.5px;
    font-weight: 700;
    line-height: 19px;
    text-align: center;
}
.switch {
    display: flex;
}
.switch i, .switch u {
    flex: 1;
}
.switch u {
    background: #eef0f3;
    color: #444;
    font-size: 8px;
    font-weight: 600;
    line-height: 19px;
    text-align: center;
    text-decoration: none;
}
.ptext {
    padding: 4px 2px;
    color: #e41ce0;
    font-size: 8.5px;
    font-weight: 700;
}
.io {
    width: 94px;
    height: 21px;
    margin-top: -1px;
    border: 2px solid #4c515b;
    outline: 1px solid #676c76;
    outline-offset: -3px;
    background: #fcfcfe;
    color: #3a3a44;
    font-size: 9px;
    font-weight: 600;
    line-height: 17px;
    padding-left: 3px;
}
.rect {
    width: 67px;
    height: 33px;
    border: 1px solid #4a4e57;
    background: #d9d8dc;
}
.circle {
    width: 34px;
    height: 34px;
    border: 1px solid #4a4e57;
    border-radius: 50%;
    background: #d9d8dc;
}
.gauge {
    margin-top: -2px;
}
.gauge text {
    font-size: 8px;
    fill: #555;
}
.bar {
    width: 54px;
    height: 40px;
    margin-top: -1px;
    border: 4px solid #4f535d;
    border-radius: 3px;
    background: #fbfcfd;
    display: flex;
    gap: 3px;
    padding: 0 0 0 2px;
    color: #555;
    font-size: 8px;
    line-height: 13px;
}
.bar svg {
    margin-top: 4px;
}
.slider {
    width: 60px;
    display: block;
    padding-left: 6px;
    color: #2f80bd;
    font-size: 8.7px;
    line-height: 11px;
}
.slider small {
    display: block;
    margin: -1px 0 0 -4px;
    color: #666;
    font-size: 7.5px;
}
.vscroll {
    width: 12px;
    background: #bdbdbd;
    display: flex;
    flex-direction: column;
}
.vscroll b {
    height: 12px;
    border: 1px solid #b0b0b0;
}
.vscroll svg, .dscroll svg {
    width: 7px;
    height: 6px;
}
.thumb {
    border: 1px solid #9a9a9a;
    background: linear-gradient(90deg, #f0f0f0, #d2d2d2);
    display: flex;
    align-items: center;
    justify-content: center;
}
.thumb i {
    width: 5px;
    height: 4px;
    border: solid #777;
    border-width: 1px 0;
}
.vscroll .thumb {
    height: 48px;
}
.track {
    flex: 1;
}
.hscroll {
    height: 13px;
    display: flex;
    background: linear-gradient(#e6e6e6, #d2d2d2);
    border-top: 1px solid #999;
    padding-right: 12px;
}
.hscroll b {
    width: 13px;
    border: 1px solid #aaa;
}
.hscroll div {
    flex: 1;
}
.hscroll svg {
    width: 6px;
    height: 8px;
}
.flip {
    transform: scaleX(-1);
}

/* properties pane */
.props-head {
    height: 20px;
    padding-right: 2px;
    border-top: 3px solid #242426;
    border-bottom: 2px solid #efefef;
    line-height: 15px;
}
.props-head > span {
    letter-spacing: .27px;
}
.ptabs {
    margin-left: auto;
    display: flex;
    align-items: center;
    color: #777;
    height: 15px;
}
.ptab {
    height: 14px;
    margin: 1px 1px 0 0;
    padding-left: 2px;
    display: flex;
    align-items: center;
    gap: 2px;
    background: linear-gradient(#d8d8d8, #c4c4c4);
    border-right: 1px solid #777;
    border-top: 1px solid #e4e4e4;
}
.ptab.on {
    background: #f0f0f0;
    color: #333;
}
.pt1 { width: 74px; }
.pt2 { width: 51px; }
.pt3 { width: 80px; margin-right: 12px; }
.ptab svg {
    width: 11px;
    height: 11px;
}
.ptab .inf {
    width: 9px;
    height: 9px;
    margin-left: 4px;
}
.pi {
    margin-right: 4px;
}
.subtabs {
    height: 17px;
    padding: 2px 0 0 4px;
    background: #cbcbcb;
    border-bottom: 1px solid #999;
}
.subtabs span {
    display: block;
    width: 67px;
    height: 15px;
    background: linear-gradient(#fafafa, #ececec);
    border: 1px solid #777;
    border-width: 1px 1px 0 1px;
    padding-left: 7px;
    font-size: 8.6px;
    font-weight: 600;
    line-height: 12px;
}
.props {
    height: 161px;
    display: flex;
}
.pnav {
    width: 116px;
    padding-top: 22px;
    background: #eeeeef;
    letter-spacing: .15px;
}
.pnav li {
    height: 12.6px;
    padding-left: 13px;
}
.pnav span {
    display: inline-block;
    background: #c5ccd4;
    margin-left: -1px;
    padding-left: 1px;
}
.splitter {
    width: 5px;
    background: #d6d6d6;
    border: 1px solid #999;
    border-width: 0 1px 0 0;
    padding-top: 61px;
}
.splitter svg {
    width: 4px;
    height: 14px;
    margin-bottom: 8px;
    background: #bbb;
}
.pform {
    width: 724px;
    padding: 7px 8px 0 8px;
}
.ptitle {
    display: flex;
    gap: 4px;
    font-size: 8.5px;
    height: 19px;
    line-height: 14px;
}
.ptitle i {
    flex: 1;
    height: 12px;
    border-bottom: 1px solid #888;
}
fieldset {
    width: 699px;
    height: 60px;
    margin-bottom: 4px;
    border: 1px solid #bdbdbd;
    background: #cbcbcb;
}
fieldset h5 {
    height: 23px;
    padding: 1px 0 0 9px;
    font-size: 8.8px;
    font-weight: 600;
    line-height: 15px;
    color: #444;
}
.frow {
    display: flex;
    height: 12px;
    margin-bottom: 4px;
    letter-spacing: .07px;
    line-height: 11px;
}
.frow label {
    width: 116px;
    margin-right: 7px;
    text-align: right;
}
.frow div {
    width: 556px;
    padding-left: 1px;
    background: #fff;
    border: 1px solid #9c9c9c;
    line-height: 10px;
}
.frow b {
    width: 12px;
    border: 1px solid #999;
    border-left: 0;
    line-height: 6px;
}

/* style sheets panel */
.right {
    width: 220px;
    background: #efefef;
}
.right .phead {
    padding-right: 4px;
}
.rbar {
    height: 18px;
    background: #e7e7ea;
    padding: 4px 4px 0 0;
}
.rbar svg {
    width: 10px;
    height: 10px;
    margin-left: auto;
}
.right .sec {
    height: 16px;
}
.cats {
    height: 200px;
    padding-top: 1px;
}
.cats li {
    display: flex;
    align-items: center;
    height: 13.35px;
    padding-left: 4px;
    gap: 3px;
}
.cats svg {
    width: 11px;
    height: 11px;
}
.cats span {
    line-height: 11px;
    padding: 0 1px;
}
.cats .on span {
    width: 36px;
    background: #2f5fd0;
    color: #e4eaf8;
}
.vbar {
    display: flex;
    gap: 5px;
    height: 21px;
    padding: 2px 0 0 5px;
}
.vbar svg {
    width: 11px;
    height: 11px;
}
.cards {
    display: flex;
    gap: 6px;
    padding-left: 5px;
}
.cards div {
    width: 41px;
    height: 41px;
    background: #fff;
    outline: 1px solid #e6e6e6;
    padding: 9px 4px;
}
.cards span {
    display: block;
    width: 32px;
    height: 22px;
    padding-left: 2px;
    font-size: 9px;
    font-weight: 500;
    line-height: 16px;
    color: #444;
}
.cards .c1 {
    border: 3px solid #66687e;
    background: #dfe3ec;
}
.cards .c2, .cards .c3 {
    padding: 1px 0 0 3px;
    border: 2px solid #5c5d66;
    border-radius: 2px;
}
.cards .c3 {
    border-color: #cfcfcf;
}
.rstrip {
    width: 17px;
    padding-top: 20px;
    background: #a3adc6;
    border-left: 1px solid #888;
    border-right: 2px solid #4d5f9c;
}
.rstrip div {
    width: 14px;
    font-size: 9px;
    font-weight: 600;
}
.rstrip span {
    writing-mode: vertical-rl;
    line-height: 13px;
}
.rstrip svg {
    width: 11px;
    height: 11px;
    margin: 0 1px;
}
.rt1 {
    height: 82px;
    padding-top: 2px;
    background: #f0f0f0;
}
.rt1 svg {
    margin-bottom: 3px;
}
.rt2 {
    height: 54px;
    padding-top: 3px;
    background: #d0d0d0;
    border: 1px solid #888;
    border-left: 0;
    color: #666;
}
.rt2 svg {
    margin-bottom: 2px;
}

/* status line */
.status {
    height: 20px;
    display: flex;
    align-items: center;
    background: #1b1b1c;
    border-bottom: 1px solid #5a6a74;
    color: #fff;
}
.portal {
    width: 120px;
    padding-left: 23px;
    display: flex;
    align-items: center;
    gap: 6px;
    font-size: 8.8px;
    font-weight: 600;
}
.portal svg {
    width: 6px;
    height: 8px;
}
.wtab {
    width: 76px;
    height: 14px;
    display: flex;
    align-items: center;
    gap: 3px;
    padding-left: 2px;
    margin-right: 2px;
    background: #bdbdbd;
    color: #444;
}
.wtab.on {
    gap: 2px;
    background: #fff;
    letter-spacing: .3px;
}
.wtab svg {
    width: 11px;
    height: 10px;
}
.s-ic {
    width: 13px;
    height: 13px;
    margin-left: auto;
}
.msg {
    width: 208px;
    height: 18px;
    margin-left: 4px;
    padding-left: 3px;
    border-left: 1px solid #444;
    display: flex;
    align-items: center;
    gap: 3px;
    color: #e6e6e6;
    font-size: 7.3px;
    font-weight: 500;
}
.msg svg {
    width: 9px;
    height: 9px;
}

/* windows taskbar */
.taskbar {
    height: 26px;
    position: relative;
    display: flex;
    align-items: center;
    padding-left: 5px;
    background: linear-gradient(rgba(255,255,255,.25), rgba(255,255,255,0) 25%), linear-gradient(90deg, #2a86b8, #3b9fd0 30%, #2a86c8 60%, #1c62aa 72%, #1a5ca2 88%, #143c70 91%, #1a4a80);
}
.streak {
    position: absolute;
    left: 872px;
    top: 0;
    width: 60px;
    height: 26px;
    filter: blur(1px);
}
.orb { width: 26px; height: 26px; }
.t-ie { width: 22px; height: 22px; margin-left: 17px; }
.t-ex { width: 23px; height: 22px; margin-left: 20px; }
.t-mp { width: 19px; height: 18px; margin-left: 19px; }
.t-cr { width: 20px; height: 20px; margin-left: 23px; }
.t-wn { width: 20px; height: 18px; margin-left: 21px; }
.t-sat { width: 22px; height: 21px; margin-left: 21px; }
.t-tia {
    width: 39px;
    height: 25px;
    margin-left: 10px;
    padding: 1px 8px;
    border: 1px solid #bcd6ea;
    background: #a3c0d6;
}
.t-tia div {
    width: 21px;
    height: 21px;
    background: #2b3045;
    color: #e8ecf2;
    font-size: 10.5px;
    font-weight: 600;
    text-align: center;
}
.t-tia span {
    display: block;
    line-height: 10.5px;
}
.tray {
    margin-left: auto;
    display: flex;
    align-items: center;
    gap: 6px;
}
.tray svg {
    width: 10px;
    height: 12px;
}
.clock {
    width: 44px;
    color: #fff;
    font-size: 7.4px;
    line-height: 11px;
    text-align: center;
}
.peek {
    width: 9px;
    height: 25px;
    margin-left: -2px;
    border: 1px solid #5a84ac;
    background: #2b5c8c;
}

/* font dialog */
.dialog {
    position: absolute;
    left: 508px;
    top: 192px;
    width: 263px;
    height: 309px;
    border: 1px solid #d8d8d8;
    background: #cbcbcb;
    display: flex;
    flex-direction: column;
}
.dtitle {
    height: 14px;
    display: flex;
    justify-content: space-between;
    background: linear-gradient(#5a595c, #1d1b1d 55%);
    color: #fff;
    font-size: 8.5px;
    font-weight: 700;
    line-height: 13px;
    padding-left: 4px;
}
.dtitle b {
    width: 13px;
    padding: 2px 1px;
    border-left: 1px solid #888;
}
.dtitle svg {
    width: 10px;
    height: 10px;
}
.dbody {
    height: 262px;
    padding: 5px 7px 0 7px;
}
.dgroup {
    border: 1px solid #bfbfbf;
}
.dgroup h5 {
    padding-left: 10px;
    font-size: 8.8px;
    font-weight: 600;
    line-height: 16px;
    color: #444;
}
.dg1 {
    height: 186px;
    margin-bottom: 6px;
}
.dg2 {
    height: 61px;
}
.dcols {
    display: flex;
    padding-left: 20px;
    gap: 5px;
    margin-bottom: 5px;
}
.dc1 { width: 85px; }
.dc2 { width: 59px; }
.dc3 { width: 37px; }
.dcols label {
    display: block;
    height: 14px;
    padding-left: 1px;
    line-height: 16px;
}
.dc3 label, .dc3 .din, .dc3 .dlist li {
    padding-left: 2px;
}
.din {
    height: 13px;
    border: 1px solid #999;
    background: #fff;
    padding-left: 1px;
    line-height: 11px;
}
.dlist {
    height: 93px;
    display: flex;
    background: #fff;
    overflow: hidden;
}
.dlist ul {
    flex: 1;
}
.dlist li {
    height: 11.35px;
    margin-right: 1px;
    padding-left: 1px;
    line-height: 14px;
}
.dlist .soft {
    background: #c6ccd2;
    color: #eef0f4;
    height: 10px;
    line-height: 10px;
    margin: 1.3px 1px 0 0;
}
.dlist .hard {
    background: #2a57c8;
    color: #fff;
    height: 9.35px;
    line-height: 10px;
    margin: 2px 0 0 1px;
}
.dc3 .dlist .hard {
    padding-left: 1px;
}
.dscroll {
    width: 13px;
    background: #b9b9b9;
    display: flex;
    flex-direction: column;
}
.dscroll b {
    height: 12px;
    border: 1px solid #aaa;
}
.dscroll .thumb {
    height: 27px;
}
.dscroll .low {
    height: 13px;
    margin-top: 49px;
    margin-bottom: 7px;
}
.dscroll .end {
    margin-top: auto;
}
.chk {
    display: flex;
    align-items: center;
    height: 12.5px;
    padding-left: 20px;
    gap: 3px;
    letter-spacing: .08px;
}
.chk i {
    width: 9px;
    height: 9px;
    border: 1px solid #888;
    background: #e0e0e0;
}
.chk.dis {
    color: #999;
}
.chk.dis i {
    border-color: #bbb;
}
.sample {
    width: 217px;
    height: 38px;
    margin-left: 23px;
    background: #fff;
    color: #222;
    font-size: 11.2px;
    font-weight: 700;
    line-height: 39px;
    text-align: center;
}
.dfoot {
    flex: 1;
    background: #adadad;
    border-bottom: 4px solid #222;
    display: flex;
    justify-content: flex-end;
    gap: 5px;
    padding: 8px 6px 0 0;
}
.dfoot div {
    width: 48px;
    height: 13px;
    border: 1px solid #909090;
    background: linear-gradient(#f2f2f2, #cacaca);
    letter-spacing: .15px;
    line-height: 11px;
    text-align: center;
}
.dfoot .ok {
    border-color: #4f9a50;
    background: linear-gradient(#c2ecb8, #74cc6c 60%, #a6e69c);
}
.cursor {
    position: absolute;
    left: 716px;
    top: 411px;
    width: 10px;
    height: 15px;
}
```
